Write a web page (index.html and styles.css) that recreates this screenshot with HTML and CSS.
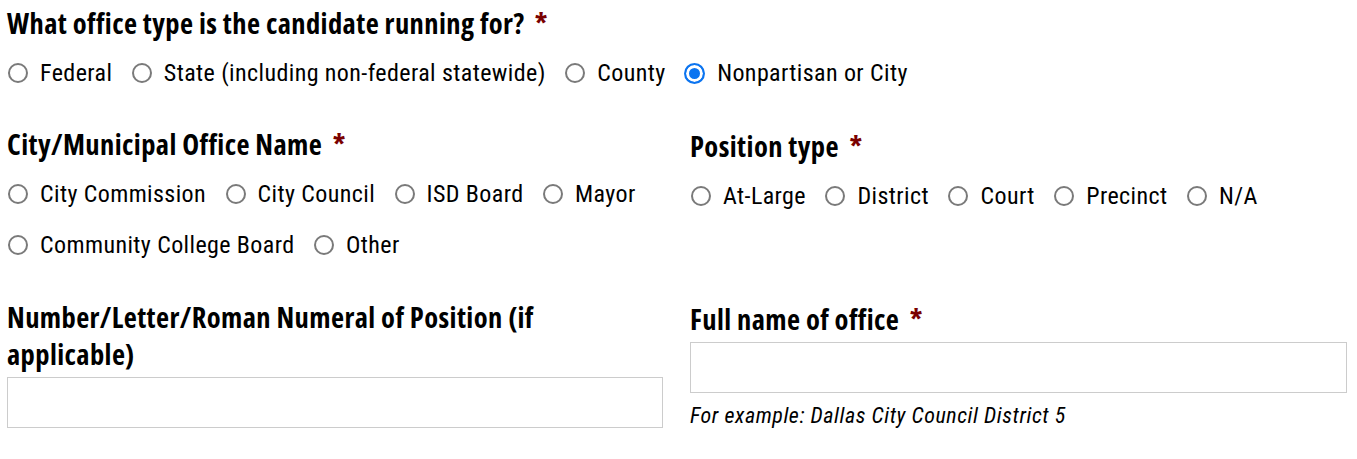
FILE: index.html
```html
<!DOCTYPE html>
<html lang="en">
<head>
<meta charset="utf-8">
<title>Office form</title>
<link rel="stylesheet" href="styles.css">
</head>
<body>
<form class="form">
  <div class="field">
    <div class="label">What office type is the candidate running for? <span class="req">*</span></div>
    <div class="options">
      <label class="opt"><input type="radio" name="otype"><span>Federal</span></label>
      <label class="opt"><input type="radio" name="otype"><span>State (including non-federal statewide)</span></label>
      <label class="opt"><input type="radio" name="otype"><span>County</span></label>
      <label class="opt"><input type="radio" name="otype" checked><span>Nonpartisan or City</span></label>
    </div>
  </div>

  <div class="grid">
    <div class="field">
      <div class="label">City/Municipal Office Name <span class="req">*</span></div>
      <div class="options">
        <label class="opt"><input type="radio" name="city"><span>City Commission</span></label>
        <label class="opt"><input type="radio" name="city"><span>City Council</span></label>
        <label class="opt"><input type="radio" name="city"><span>ISD Board</span></label>
        <label class="opt"><input type="radio" name="city"><span>Mayor</span></label>
        <label class="opt"><input type="radio" name="city"><span>Community College Board</span></label>
        <label class="opt"><input type="radio" name="city"><span>Other</span></label>
      </div>
    </div>
    <div class="field shift">
      <div class="label">Position type <span class="req">*</span></div>
      <div class="options">
        <label class="opt"><input type="radio" name="ptype"><span>At-Large</span></label>
        <label class="opt"><input type="radio" name="ptype"><span>District</span></label>
        <label class="opt"><input type="radio" name="ptype"><span>Court</span></label>
        <label class="opt"><input type="radio" name="ptype"><span>Precinct</span></label>
        <label class="opt"><input type="radio" name="ptype"><span>N/A</span></label>
      </div>
    </div>

    <div class="field lower">
      <div class="label">Number/Letter/Roman Numeral of Position (if applicable)</div>
      <input class="text" type="text">
    </div>
    <div class="field lower shift">
      <div class="label">Full name of office <span class="req">*</span></div>
      <input class="text" type="text">
      <div class="help">For example: Dallas City Council District 5</div>
    </div>
  </div>
</form>
</body>
</html>
```

FILE: styles.css
```css
html, body {
  margin: 0;
  padding: 0;
  background: #fff;
}

.form {
  padding: 5px 10px 0 7px;
  color: #000;
}

.label {
  font-family: "Open Sans", "Liberation Sans Narrow", "DejaVu Sans Condensed", sans-serif;
  font-stretch: 75%;
  font-weight: 700;
  font-size: 28.5px;
  letter-spacing: 0.4px;
  line-height: 37px;
  max-width: 600px;
}

.req {
  color: #7a0000;
  margin-left: 5px;
}

.options {
  display: flex;
  flex-wrap: wrap;
  column-gap: 18.5px;
  row-gap: 21px;
  margin-top: 16px;
}

.opt {
  display: flex;
  align-items: center;
  gap: 12px;
  height: 30px;
  font-family: "Roboto", "DejaVu Sans Condensed", sans-serif;
  font-stretch: 75%;
  font-size: 24px;
  letter-spacing: 0.4px;
  color: #000;
}

.opt input {
  appearance: none;
  -webkit-appearance: none;
  box-sizing: border-box;
  width: 20px;
  height: 20px;
  margin: 0 0 0 1px;
  flex: none;
  border: 2px solid #7a7a7a;
  border-radius: 50%;
  background: #fff;
}

.opt input:checked {
  width: 21px;
  height: 21px;
  margin-left: 0;
  border-color: #0b74f0;
  background: #0b74f0;
  box-shadow: inset 0 0 0 3px #fff;
}

.grid {
  display: grid;
  grid-template-columns: 656px 657px;
  column-gap: 27px;
  margin-top: 38px;
  align-items: start;
}

.shift {
  padding-top: 2px;
}

.lower {
  margin-top: 39px;
}

.text {
  display: block;
  box-sizing: border-box;
  width: 100%;
  height: 51px;
  margin: 4px 0 0;
  border: 1px solid #cccccc;
  border-radius: 0;
  background: #fff;
  padding: 6px 10px;
  font-family: "Roboto", sans-serif;
  font-size: 20px;
}

.help {
  margin-top: 8px;
  font-family: "Roboto", "DejaVu Sans Condensed", sans-serif;
  font-stretch: 75%;
  font-style: italic;
  font-size: 22px;
  letter-spacing: 0.55px;
  line-height: 30px;
}
```
